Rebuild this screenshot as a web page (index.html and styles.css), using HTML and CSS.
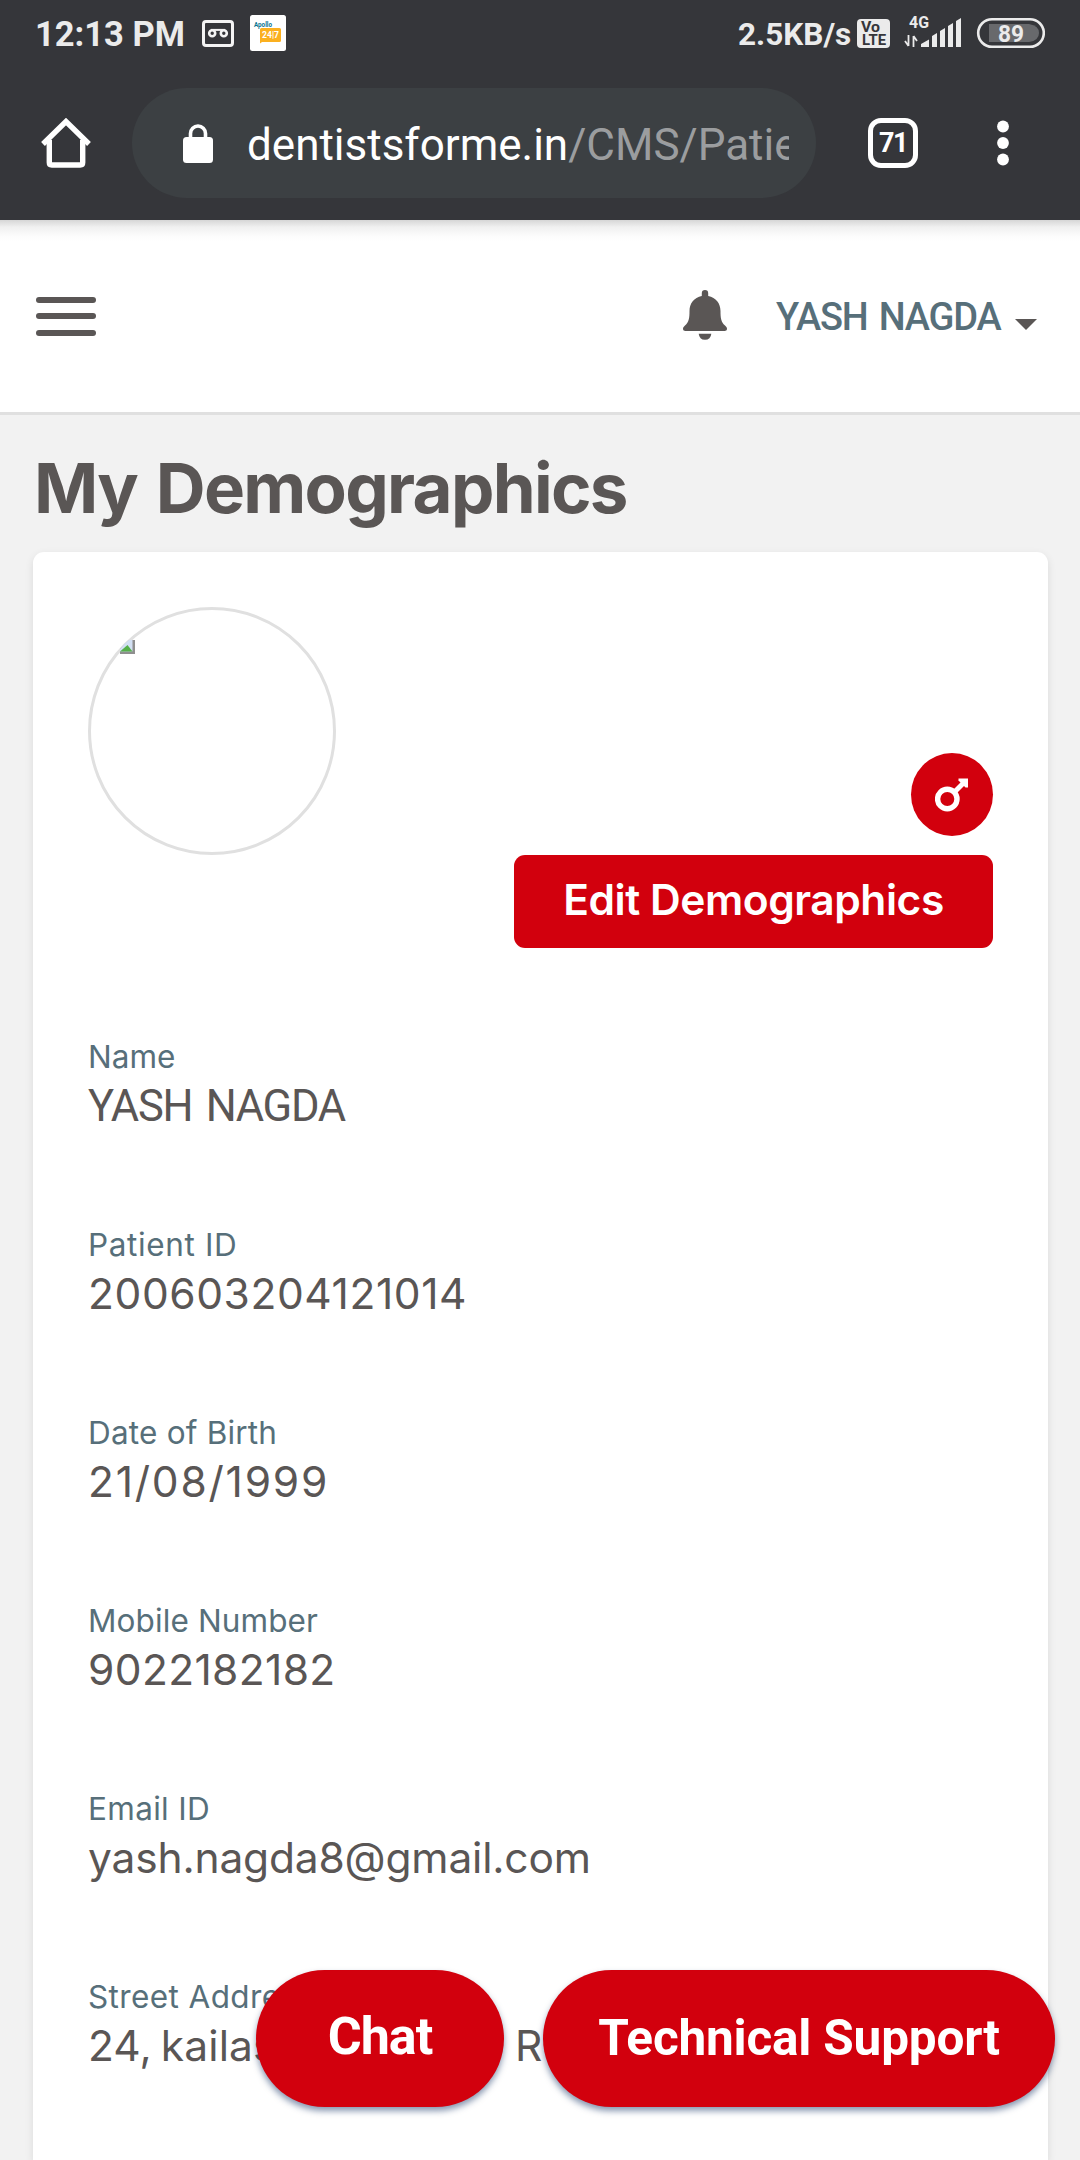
FILE: index.html
```html
<!DOCTYPE html>
<html lang="en">
<head>
<meta charset="utf-8">
<title>My Demographics</title>
<link rel="stylesheet" href="styles.css">
</head>
<body>
<div class="chrome">
  <div class="status">
    <span class="clock">12:13 PM</span>
    <svg class="voicemail" width="32" height="27" viewBox="0 0 32 27" fill="none" stroke="#f4f4f4">
      <rect x="1.5" y="1.5" width="29" height="24" rx="2.5" stroke-width="3"/>
      <circle cx="10.2" cy="13.3" r="3" stroke-width="2.6"/>
      <circle cx="21.8" cy="13.3" r="3" stroke-width="2.6"/>
      <path d="M9 9.900h14" stroke-width="2"/>
    </svg>
    <svg class="apollo" width="36" height="36" viewBox="0 0 36 36">
      <rect width="36" height="36" rx="2.5" fill="#fff"/>
      <path d="M11.5 13h18a1.5 1.5 0 0 1 1.500 1.500v11a1.500 1.500 0 0 1-1.500 1.500H12l-2 1.500V14.500A1.500 1.500 0 0 1 11.500 13z" fill="#fbb01f"/>
      <text x="4" y="12.300" class="apollo-name" textLength="18" lengthAdjust="spacingAndGlyphs">Apollo</text>
      <text x="12" y="23.200" class="apollo-num" textLength="17" lengthAdjust="spacingAndGlyphs">24|7</text>
    </svg>
    <span class="speed">2.5KB/s</span>
    <svg class="signals" width="188" height="66" viewBox="0 0 188 66">
      <rect x="0" y="19" width="33" height="29" rx="4" fill="#ebebeb"/>
      <text x="4" y="32" class="volte" textLength="19" lengthAdjust="spacingAndGlyphs">Vo</text>
      <text x="5" y="44.500" class="volte" textLength="24" lengthAdjust="spacingAndGlyphs">LTE</text>
      <text x="52" y="28" class="net" textLength="20" lengthAdjust="spacingAndGlyphs">4G</text>
      <path d="M51.500 35v11M51.500 46l-3.500-5M56.500 47V36M56.500 36l3.500 5" stroke="#ebebeb" stroke-width="1.800" fill="none"/>
      <path d="M64 47v-3l8-4.500V47zM75 47V36l5-3v14zM83 47V31l5-3v19zM91 47V26l5-3v24zM99 47V21l5-3v29z" fill="#ebebeb"/>
      <rect x="121.200" y="19.200" width="65.600" height="27.600" rx="13.800" fill="none" stroke="#ebebeb" stroke-width="2.600"/>
      <path d="M132 24h40q10 1.500 10 9t-10 9h-40z" fill="#68696c"/>
      <text x="141" y="42" class="batt" textLength="26" lengthAdjust="spacingAndGlyphs">89</text>
    </svg>
  </div>
  <div class="toolbar">
    <svg class="home" width="50" height="50" viewBox="0 0 50 50" fill="none" stroke="#fff" stroke-width="5.400" stroke-linejoin="round">
      <path d="M2 26L25 3.500 48 26" stroke-linejoin="miter"/>
      <path d="M8.300 22v22.500q0 2.500 2.500 2.500h28.400q2.500 0 2.500-2.500V22"/>
    </svg>
    <div class="omnibox">
      <svg class="lock" width="30" height="39" viewBox="0 0 30 39">
        <path d="M7.500 15V9.500a7.500 7.500 0 0 1 15 0V15" fill="none" stroke="#fff" stroke-width="3.600"/>
        <rect y="13" width="30" height="26" rx="3.500" fill="#fff"/>
      </svg>
      <div class="url">dentistsforme.in<span class="path">/CMS/Patie</span></div>
    </div>
    <div class="tabs">71</div>
    <svg class="dots" width="12" height="46" viewBox="0 0 12 46" fill="#fff">
      <circle cx="6" cy="6.500" r="5.900"/><circle cx="6" cy="23" r="5.900"/><circle cx="6" cy="39.500" r="5.900"/>
    </svg>
  </div>
</div>
<header class="app-header">
  <div class="burger"><i></i><i></i><i></i></div>
  <svg class="bell" width="44" height="50" viewBox="0 0 44 50" fill="#5a5655">
    <path d="M22 0a3.200 3.200 0 0 1 3.200 3.200V6C33 7.500 37.500 13.500 37.500 21c0 7 .5 11 4.500 14.500 1.500 1.400 2 2.300 2 3.300 0 1.400-1 2.200-2.500 2.200h-39C1 41 0 40.200 0 38.800c0-1 .5-1.900 2-3.300C6 32 6.500 28 6.500 21c0-7.500 4.500-13.500 12.300-15V3.200A3.200 3.200 0 0 1 22 0z"/>
    <path d="M15.700 43.800h12.600q-.6 6-6.300 6t-6.300-6z"/>
  </svg>
  <span class="user">YASH NAGDA</span>
  <svg class="caret" width="22" height="11" viewBox="0 0 22 11"><path d="M0 0h22L11 11z" fill="#5a5655"/></svg>
</header>
<main>
  <h1>My Demographics</h1>
  <section class="card">
    <div class="card-top">
      <div class="avatar">
        <svg width="15" height="14" viewBox="0 0 15 14">
          <path d="M9.500 0H15v14H0V9z" fill="#8f8f8f"/>
          <path d="M5 3.500L9 0h3.500v11.500H0V9z" fill="#d3e0f4"/>
          <path d="M0 11.500l7.500-6.500 5 6.500z" fill="#55b04a"/>
        </svg>
      </div>
      <div class="actions">
        <div class="gender">
          <svg width="34" height="34" viewBox="0 0 34 34" fill="none" stroke="#fff">
            <circle cx="12.300" cy="21" r="9.700" stroke-width="5.400"/>
            <path d="M19 14.500L29 4.500" stroke-width="5"/>
            <path d="M23.500 .5H33V9.500H30.500L23.500 2.500z" fill="#fff" stroke="none"/>
          </svg>
        </div>
        <button class="edit">Edit Demographics</button>
      </div>
    </div>
    <dl class="fields">
      <div><dt>Name</dt><dd class="v-name">YASH NAGDA</dd></div>
      <div><dt class="l-pid">Patient ID</dt><dd class="v-pid">200603204121014</dd></div>
      <div><dt class="l-dob">Date of Birth</dt><dd class="v-dob">21/08/1999</dd></div>
      <div><dt class="l-mob">Mobile Number</dt><dd class="v-mob">9022182182</dd></div>
      <div><dt class="l-mail">Email ID</dt><dd class="v-mail">yash.nagda8@gmail.com</dd></div>
      <div><dt class="l-addr">Street Address</dt><dd class="v-addr"><span class="street">24, kailas</span><span>R</span></dd></div>
    </dl>
  </section>
</main>
<div class="fabs">
  <button class="fab chat">Chat</button>
  <button class="fab support">Technical Support</button>
</div>
</body>
</html>
```
FILE: styles.css
```css
* { box-sizing: border-box; }
html, body { margin: 0; }
body {
  position: relative;
  width: 1080px;
  height: 2160px;
  overflow: hidden;
  display: flex;
  flex-direction: column;
  background: #f2f2f2;
  color: #5a5655;
  font-family: Inter, "Liberation Sans", sans-serif;
}
svg { display: block; flex: none; }
button { border: 0; padding: 0; margin: 0; color: #fff; background: #d2000d; white-space: nowrap; }

/* browser chrome */
.chrome {
  flex: none;
  height: 220px;
  background: #35363a;
  color: #fff;
  font-family: Roboto, sans-serif;
}
.status { display: flex; align-items: center; height: 66px; padding: 0 35px; color: #ebebeb; font-weight: 700; }
.clock { width: 167px; font-size: 34.5px; line-height: 66px; padding-top: 2px; white-space: nowrap; }
.apollo { margin-left: 16px; }
.apollo-name { font: 700 7px Roboto, sans-serif; fill: #0b7490; }
.apollo-num { font: 700 9px Roboto, sans-serif; fill: #fff; }
.speed { margin-left: auto; width: 119px; padding-top: 2px; font-size: 31.5px; white-space: nowrap; }
.volte { font: 700 14.5px Roboto, sans-serif; fill: #35363a; }
.net { font: 700 16px Roboto, sans-serif; fill: #ebebeb; }
.batt { font: 700 24px Roboto, sans-serif; fill: #ebebeb; }

.toolbar { display: flex; align-items: center; height: 110px; margin-top: 22px; padding: 0 71px 0 41px; }
.omnibox {
  display: flex;
  align-items: center;
  width: 684px;
  height: 110px;
  margin-left: 41px;
  padding-left: 51px;
  border-radius: 55px;
  background: #3c4043;
}
.url {
  width: 542px;
  margin-left: 34px;
  padding-top: 4px;
  overflow: hidden;
  font-size: 44px;
  line-height: 60px;
  white-space: nowrap;
}
.path { color: #9b9d9f; }
.tabs {
  width: 50px;
  height: 50px;
  margin-left: 52px;
  border: 5.5px solid #fff;
  border-radius: 13px;
  font-size: 27px;
  font-weight: 700;
  line-height: 41px;
  letter-spacing: -1.5px;
  text-align: center;
}
.dots { margin-left: auto; }

/* site header */
.app-header {
  flex: none;
  display: flex;
  align-items: center;
  height: 195px;
  padding: 0 43px 0 36px;
  border-bottom: 3px solid #e0e0e0;
  background: linear-gradient(#d6d6d6, #f0f0f0 7px, #fcfcfc 16px, #fff 22px);
}
.burger { display: grid; gap: 10.5px; width: 60px; }
.burger i { height: 6px; border-radius: 3px; background: #5a5655; }
.bell { margin: -2px 0 0 auto; }
.user {
  width: 239px;
  margin-left: 49px;
  color: #576f7a;
  font-family: Roboto, sans-serif;
  font-size: 38px;
  font-weight: 500;
  line-height: 42px;
  letter-spacing: -1.2px;
  word-spacing: 3px;
  padding-top: 2px;
  white-space: nowrap;
}
.caret { margin-top: 17px; }

main { flex: 1; display: flex; flex-direction: column; padding: 33px 32px 0 33px; }
h1 { margin: 0 0 24px 1px; font-size: 69px; line-height: 80px; font-weight: 700; letter-spacing: -1.7px; word-spacing: 4px; }
.card {
  flex: 1;
  padding: 55px 55px 0;
  border-radius: 11px 11px 0 0;
  background: #fff;
  box-shadow: 0 3px 8px rgba(0, 0, 0, .1);
}
.card-top { display: flex; justify-content: space-between; height: 341px; }
.avatar { width: 248px; height: 248px; padding: 30px 0 0 29px; border: 3px solid #e0e0e0; border-radius: 50%; }
.actions { display: flex; flex-direction: column; align-items: flex-end; justify-content: flex-end; gap: 19px; }
.gender { display: grid; place-items: center; width: 82px; height: 83px; border-radius: 50%; background: #d2000d; }
.edit {
  width: 479px;
  height: 93px;
  border-radius: 11px;
  font: 600 42.5px/90px Inter, sans-serif;
  letter-spacing: -.45px;
  padding-bottom: 3px;
}

.fields { display: grid; gap: 93px; margin: 89px 0 0; white-space: nowrap; }
.fields dt { height: 40px; color: #576f7a; font-size: 31.5px; line-height: 40px; font-weight: 400; }
.fields dd { height: 52px; margin: 3px 0 0; font-size: 42.5px; line-height: 52px; font-weight: 400; }
.l-pid { letter-spacing: .63px; }
.l-dob { letter-spacing: .2px; }
.l-mob { letter-spacing: .11px; }
.l-mail { letter-spacing: .32px; }
.l-addr { letter-spacing: .4px; }
.fields .v-name { font-family: Roboto, sans-serif; font-size: 43.5px; line-height: 53px; letter-spacing: -1.3px; word-spacing: 4px; }
.v-pid { letter-spacing: .58px; }
.v-dob { letter-spacing: 1.78px; }
.v-mob { letter-spacing: .36px; }
.v-mail { letter-spacing: -.18px; }
.v-addr { display: flex; word-spacing: -3px; letter-spacing: .1px; }
.street { width: 427px; }

/* floating actions over the page */
.fabs { position: absolute; right: 25px; bottom: 53px; display: flex; gap: 39px; }
.fab { height: 137px; border-radius: 69px; box-shadow: 0 4px 6px rgba(20, 50, 100, .5); }
.chat { width: 248px; font: 700 52px/133px Roboto, sans-serif; letter-spacing: -1px; padding-bottom: 4px; }
.support { width: 512px; font: 700 49.5px/137px Roboto, sans-serif; letter-spacing: -.2px; }
```
